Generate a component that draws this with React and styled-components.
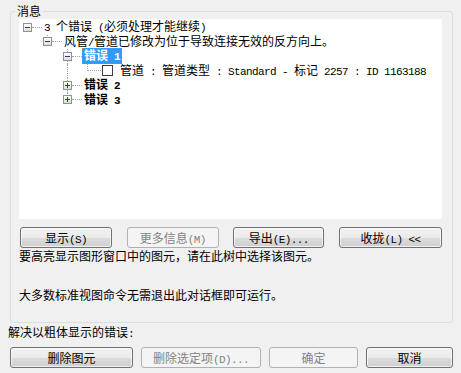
import React from "react";
import styled, { createGlobalStyle, css } from "styled-components";

const GlobalStyle = createGlobalStyle`
  html, body {
    margin: 0;
    padding: 0;
    background: #f0f0f0;
  }
  body {
    font-family: "Noto Sans CJK SC", "Noto Sans", sans-serif;
    font-size: 12px;
    color: #000;
  }
`;

const Dialog = styled.div`
  width: 461px;
  height: 373px;
  box-sizing: border-box;
  padding: 4px 8px 0 8px;
  background: #f0f0f0;
  overflow: hidden;
`;

const Group = styled.fieldset`
  margin: 0 0 0 2px;
  width: 443px;
  box-sizing: border-box;
  border: 1px solid #d5dfe5;
  border-radius: 3px;
  padding: 1px 10px 20px 8px;
`;

const Legend = styled.legend`
  margin-left: -4px;
  padding: 0 2px;
  line-height: 14px;
`;

const Tree = styled.div`
  height: 200px;
  box-sizing: border-box;
  padding-top: 1px;
  background: #fff;
`;

const Row = styled.div`
  position: relative;
  display: flex;
  align-items: center;
  height: 14.5px;
  padding-left: ${(p) => 4 + p.$level * 20}px;
  white-space: nowrap;
`;

const Guide = styled.span`
  position: absolute;
  left: ${(p) => 8 + p.$level * 20}px;
  top: 0;
  height: ${(p) => (p.$end ? "50%" : "100%")};
  border-left: 1px dotted #a0a0a0;
`;

const Expander = styled.span`
  position: relative;
  z-index: 1;
  flex: none;
  width: 9px;
  height: 9px;
  box-sizing: border-box;
  border: 1px solid #919191;
  background: linear-gradient(#ffffff, #dcdcdc);

  &::before {
    content: "";
    position: absolute;
    left: 1px;
    top: 3px;
    width: 5px;
    height: 1px;
    background: #1f3b8f;
  }

  ${(p) =>
    p.$closed &&
    css`
      &::after {
        content: "";
        position: absolute;
        left: 3px;
        top: 1px;
        width: 1px;
        height: 5px;
        background: #1f3b8f;
      }
    `}
`;

const Dots = styled.span`
  flex: none;
  width: ${(p) => p.$w}px;
  margin-left: ${(p) => p.$ml || 0}px;
  height: 0;
  border-top: 1px dotted #a0a0a0;
`;

const Check = styled.span`
  flex: none;
  width: 11px;
  height: 11px;
  margin-left: 1px;
  box-sizing: border-box;
  border: 1px solid #3c3c3c;
  background: #fff;
`;

const Label = styled.span`
  padding: 0 2px;
  margin-left: ${(p) => p.$ml || 0}px;
  line-height: 14px;
  font-weight: ${(p) => (p.$bold ? 700 : 400)};

  ${(p) =>
    p.$selected &&
    css`
      background: #3399ff;
      color: #fff;
      outline: 1px dotted #c87d28;
      outline-offset: -1px;
    `}
`;

const Latin = styled.span`
  font-family: "Liberation Mono", monospace;
  font-size: 11px;
  letter-spacing: -0.6px;
`;

const Txt = ({ children }) =>
  children
    .split(/([\x20-\x7e]+)/)
    .map((part, i) => (i % 2 ? <Latin key={i}>{part}</Latin> : part));

const ButtonRow = styled.div`
  display: flex;
  justify-content: space-between;
  margin-top: ${(p) => p.$mt}px;
  padding-left: ${(p) => p.$pl || 0}px;
  margin-left: ${(p) => p.$ml || 0}px;
`;

const Button = styled.button`
  flex: none;
  width: ${(p) => p.$w}px;
  height: 21px;
  padding: 0;
  font: inherit;
  line-height: 19px;
  color: #000;
  border: 1px solid #707070;
  border-radius: 3px;
  background: linear-gradient(#f2f2f2 0%, #ebebeb 50%, #dddddd 51%, #cfcfcf 100%);
  box-shadow: inset 0 0 0 1px rgba(255, 255, 255, 0.7);

  &:disabled {
    color: #838383;
    border-color: #adb2b5;
    background: #f4f4f4;
    box-shadow: none;
  }
`;

const Note = styled.div`
  margin-top: ${(p) => p.$mt}px;
  line-height: 14px;
  white-space: nowrap;
`;

const Hint = styled.div`
  margin-top: 2px;
  line-height: 14px;
`;

const tree = [
  { level: 0, exp: "open", text: "3 个错误 (必须处理才能继续)" },
  { level: 1, exp: "open", text: "风管/管道已修改为位于导致连接无效的反方向上。", guides: [{ level: 1, end: true }] },
  { level: 2, exp: "open", text: "错误 1", bold: true, selected: true, guides: [{ level: 2 }] },
  {
    level: 3,
    check: true,
    text: "管道 : 管道类型 : Standard - 标记 2257 : ID 1163188",
    guides: [{ level: 2 }, { level: 3, end: true }],
  },
  { level: 2, exp: "closed", text: "错误 2", bold: true, guides: [{ level: 2 }] },
  { level: 2, exp: "closed", text: "错误 3", bold: true, guides: [{ level: 2, end: true }] },
];

const TreeRow = ({ row }) => (
  <Row $level={row.level}>
    {(row.guides || []).map((g, i) => (
      <Guide key={i} $level={g.level} $end={g.end} />
    ))}
    {row.exp ? (
      <>
        <Expander $closed={row.exp === "closed"} />
        <Dots $w={10} />
        <Label $bold={row.bold} $selected={row.selected}>
          <Txt>{row.text}</Txt>
        </Label>
      </>
    ) : (
      <>
        <Dots $w={14} $ml={4} />
        <Check />
        <Label $ml={5}>
          <Txt>{row.text}</Txt>
        </Label>
      </>
    )}
  </Row>
);

export default function App() {
  return (
    <Dialog>
      <GlobalStyle />
      <Group>
        <Legend>消息</Legend>
        <Tree>
          {tree.map((row, i) => (
            <TreeRow key={i} row={row} />
          ))}
        </Tree>
        <ButtonRow $mt={8} $pl={1}>
          <Button $w={92}><Txt>显示(S)</Txt></Button>
          <Button $w={92} disabled><Txt>更多信息(M)</Txt></Button>
          <Button $w={91}><Txt>导出(E)...</Txt></Button>
          <Button $w={103}><Txt>收拢(L) &lt;&lt;</Txt></Button>
        </ButtonRow>
        <Note $mt={1}>要高亮显示图形窗口中的图元，请在此树中选择该图元。</Note>
        <Note $mt={25}>大多数标准视图命令无需退出此对话框即可运行。</Note>
      </Group>
      <Hint><Txt>解决以粗体显示的错误:</Txt></Hint>
      <ButtonRow $mt={6} $ml={2}>
        <Button $w={123}>删除图元</Button>
        <Button $w={120} disabled><Txt>删除选定项(D)...</Txt></Button>
        <Button $w={89} disabled>确定</Button>
        <Button $w={87}>取消</Button>
      </ButtonRow>
    </Dialog>
  );
}
